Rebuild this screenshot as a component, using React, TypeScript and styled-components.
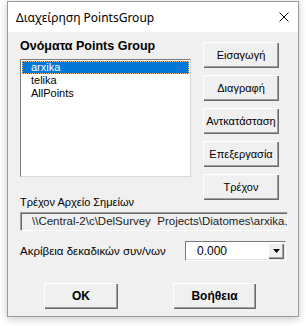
import styled, { createGlobalStyle } from 'styled-components';

const GlobalStyle = createGlobalStyle`
  html, body {
    margin: 0;
    padding: 0;
    background: #ffffff;
  }
  body {
    font-family: "Liberation Sans", Arial, sans-serif;
  }
`;

const items = ['arxika', 'telika', 'AllPoints'];
const actions = ['Εισαγωγή', 'Διαγραφή', 'Αντκατάσταση', 'Επεξεργασία', 'Τρέχον'];

export default function App() {
  return (
    <>
      <GlobalStyle />
      <Page>
        <Window>
          <TitleBar>
            <Title>Διαχείρηση PointsGroup</Title>
            <CloseIcon width="10" height="10" viewBox="0 0 10 10">
              <path d="M0.5 0.5 L9.5 9.5 M9.5 0.5 L0.5 9.5" stroke="#111" strokeWidth="1" />
            </CloseIcon>
          </TitleBar>
          <Body>
            <TopRow>
              <LeftColumn>
                <Heading>Ονόματα Points Group</Heading>
                <ListBox>
                  {items.map((item, i) => (
                    <ListItem key={item} selected={i === 0}>
                      {item}
                    </ListItem>
                  ))}
                </ListBox>
                <Label>Τρέχον Αρχείο Σημείων</Label>
              </LeftColumn>
              <ButtonColumn>
                {actions.map((a) => (
                  <Button key={a}>{a}</Button>
                ))}
              </ButtonColumn>
            </TopRow>
            <PathBox>\\Central-2\c\DelSurvey&nbsp; Projects\Diatomes\arxika.txt</PathBox>
            <PrecisionRow>
              <Label>Ακρίβεια δεκαδικών συν/νων</Label>
              <Combo>
                <ComboValue>0.000</ComboValue>
                <ComboArrow>
                  <svg width="7" height="4" viewBox="0 0 7 4">
                    <path d="M0 0 H7 L3.5 4 Z" fill="#000" />
                  </svg>
                </ComboArrow>
              </Combo>
            </PrecisionRow>
            <Footer>
              <Button width={74} height={26} bold>
                OK
              </Button>
              <Button width={83} height={26} bold>
                Βοήθεια
              </Button>
            </Footer>
          </Body>
        </Window>
      </Page>
    </>
  );
}

const Page = styled.div`
  width: 306px;
  height: 326px;
  padding: 1px 0 0 7px;
  box-sizing: border-box;
`;

const Window = styled.div`
  width: 292px;
  height: 316px;
  box-sizing: border-box;
  border: 1px solid #9a9a9a;
  background: #f0f0f0;
  box-shadow: 0 2px 8px rgba(0, 0, 0, 0.22);
  display: flex;
  flex-direction: column;
`;

const TitleBar = styled.div`
  height: 30px;
  background: #ffffff;
  display: flex;
  align-items: center;
  justify-content: space-between;
  padding: 0 9px 0 8px;
  flex-shrink: 0;
`;

const Title = styled.span`
  font-family: "Noto Sans", "Open Sans", sans-serif;
  font-size: 12px;
  color: #000;
`;

const CloseIcon = styled.svg`
  display: block;
  margin-top: -1px;
`;

const Body = styled.div`
  padding: 10px 10px 0 12px;
  display: flex;
  flex-direction: column;
`;

const TopRow = styled.div`
  display: grid;
  grid-template-columns: 171px 76px;
  column-gap: 12px;
  align-items: start;
`;

const LeftColumn = styled.div`
  display: flex;
  flex-direction: column;
  margin-top: -4px;
`;

const Heading = styled.div`
  font-weight: bold;
  font-size: 12.5px;
  line-height: 17px;
  color: #000;
`;

const ListBox = styled.div`
  margin-top: 4px;
  height: 118px;
  box-sizing: border-box;
  background: #fff;
  border-top: 1px solid #7a7a7a;
  border-left: 1px solid #7a7a7a;
  border-right: 1px solid #d8d8d8;
  border-bottom: 1px solid #d8d8d8;
  padding: 1px;
`;

const ListItem = styled.div<{ selected?: boolean }>`
  font-size: 11px;
  line-height: 13px;
  padding-left: 9px;
  color: ${(p) => (p.selected ? '#fff' : '#000')};
  background: ${(p) => (p.selected ? '#0078d7' : 'transparent')};
  outline: ${(p) => (p.selected ? '1px dotted #f5c08a' : 'none')};
  outline-offset: -1px;
`;

const Label = styled.div`
  font-size: 11px;
  line-height: 14px;
  color: #000;
  margin-top: 18px;
`;

const ButtonColumn = styled.div`
  display: flex;
  flex-direction: column;
  gap: 7px;
`;

const Button = styled.div<{ width?: number; height?: number; bold?: boolean }>`
  width: ${(p) => (p.width ? `${p.width}px` : '100%')};
  height: ${(p) => p.height ?? 26}px;
  box-sizing: border-box;
  display: flex;
  align-items: center;
  justify-content: center;
  background: #f0f0f0;
  font-size: ${(p) => (p.bold ? '12px' : '11px')};
  font-weight: ${(p) => (p.bold ? 'bold' : 'normal')};
  color: #000;
  white-space: nowrap;
  box-shadow: inset 1px 1px 0 #ffffff, inset -1px -1px 0 #696969,
    inset -2px -2px 0 #a0a0a0;
`;

const PathBox = styled.div`
  margin-top: 3px;
  height: 19px;
  box-sizing: border-box;
  background: #f0f0f0;
  border-top: 1px solid #a0a0a0;
  border-left: 1px solid #a0a0a0;
  border-right: 1px solid #fff;
  border-bottom: 1px solid #fff;
  box-shadow: inset 1px 1px 0 #696969;
  padding: 0 0 0 11px;
  font-size: 11.5px;
  line-height: 17px;
  color: #222;
  white-space: nowrap;
  overflow: hidden;
`;

const PrecisionRow = styled.div`
  margin-top: 10px;
  display: flex;
  align-items: center;
  justify-content: space-between;
  padding-right: 2px;

  ${Label} {
    margin-top: 0;
    font-size: 11.5px;
  }
`;

const Combo = styled.div`
  width: 101px;
  height: 20px;
  box-sizing: border-box;
  background: #fff;
  border-top: 1px solid #7a7a7a;
  border-left: 1px solid #7a7a7a;
  border-right: 1px solid #fff;
  border-bottom: 1px solid #fff;
  box-shadow: inset -1px -1px 0 #e3e3e3;
  display: flex;
  align-items: stretch;
  padding: 1px;
`;

const ComboValue = styled.div`
  flex: 1;
  font-size: 12px;
  line-height: 16px;
  padding-left: 10px;
  color: #000;
`;

const ComboArrow = styled.div`
  width: 16px;
  display: flex;
  align-items: center;
  justify-content: center;
  background: #f0f0f0;
  box-shadow: inset 1px 1px 0 #fff, inset -1px -1px 0 #696969,
    inset -2px -2px 0 #a0a0a0;
`;

const Footer = styled.div`
  margin-top: 22px;
  padding-left: 24px;
  display: flex;
  gap: 55px;
`;
